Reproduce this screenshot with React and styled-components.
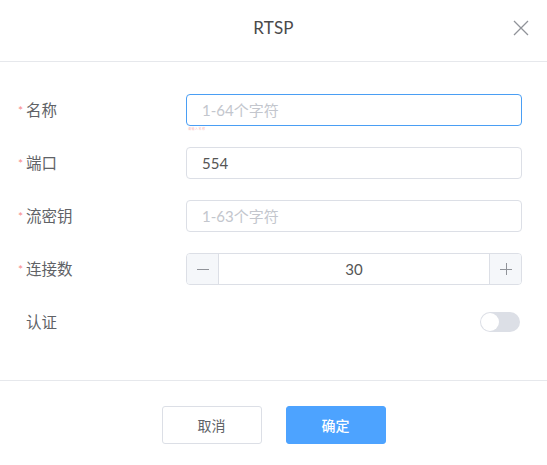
import React, { useState } from "react";
import styled, { createGlobalStyle } from "styled-components";

const Global = createGlobalStyle`
  html, body { margin: 0; padding: 0; background: #fff; }
  body { font-family: Lato, "Noto Sans CJK SC", sans-serif; }
  * { box-sizing: border-box; }
`;

const Dialog = styled.div`
  width: 547px;
  height: 465px;
  background: #fff;
  display: flex;
  flex-direction: column;
`;

const Header = styled.div`
  height: 62px;
  border-bottom: 1px solid #e6e8ec;
  display: flex;
  align-items: center;
  justify-content: center;
  position: relative;
  padding-bottom: 6px;
`;

const Title = styled.div`
  font-size: 17px;
  font-weight: 400;
  color: #4a4a4a;
  letter-spacing: 0.2px;
`;

const Close = styled.button`
  position: absolute;
  right: 17px;
  top: 19px;
  width: 18px;
  height: 18px;
  padding: 0;
  border: none;
  background: transparent;
  display: flex;
  align-items: center;
  justify-content: center;
`;

const Body = styled.div`
  padding: 32px 25px 42px 18px;
  display: flex;
  flex-direction: column;
  gap: 21px;
  border-bottom: 1px solid #e6e8ec;
`;

const Row = styled.div`
  display: flex;
  align-items: center;
  height: 32px;
  position: relative;
`;

const Label = styled.div`
  width: 168px;
  font-size: 15.5px;
  color: #606266;
  display: flex;
  align-items: center;
  padding-bottom: 2px;
`;

const Star = styled.span`
  color: #f78989;
  font-size: 12px;
  width: 8px;
  display: inline-block;
  visibility: ${(p) => (p.$hidden ? "hidden" : "visible")};
  position: relative;
  top: 1px;
`;

const Input = styled.input`
  flex: 1;
  height: 32px;
  border: 1px solid ${(p) => (p.$focus ? "#4a9ef4" : "#dcdfe6")};
  border-radius: 4px;
  padding: 0 15px;
  font-family: Lato, "Noto Sans CJK SC", sans-serif;
  font-size: 15px;
  color: #555;
  outline: none;
  &::placeholder { color: #c3c6cd; }
`;

const Hint = styled.div`
  position: absolute;
  left: 170px;
  top: 33px;
  font-size: 3px;
  color: #f7b8b8;
  letter-spacing: 0.5px;
`;

const Stepper = styled.div`
  flex: 1;
  height: 32px;
  border: 1px solid #dcdfe6;
  border-radius: 4px;
  display: flex;
  overflow: hidden;
`;

const StepBtn = styled.div`
  width: 32px;
  background: #f5f7fa;
  display: flex;
  align-items: center;
  justify-content: center;
  ${(p) => (p.$left ? "border-right: 1px solid #dcdfe6;" : "border-left: 1px solid #dcdfe6;")}
`;

const StepValue = styled.div`
  flex: 1;
  display: flex;
  align-items: center;
  justify-content: center;
  font-size: 15px;
  color: #555;
`;

const Spacer = styled.div`
  flex: 1;
`;

const Switch = styled.div`
  width: 40px;
  height: 20px;
  border-radius: 10px;
  background: #dcdfe6;
  position: relative;
  margin-right: 2px;
  &::after {
    content: "";
    position: absolute;
    left: 1px;
    top: 1px;
    width: 18px;
    height: 18px;
    border-radius: 50%;
    background: #fff;
  }
`;

const Footer = styled.div`
  flex: 1;
  display: flex;
  justify-content: center;
  gap: 24px;
  padding-top: 25px;
`;

const Button = styled.button`
  width: 100px;
  height: 38px;
  border-radius: 3px;
  font-family: Lato, "Noto Sans CJK SC", sans-serif;
  font-size: 14px;
  border: 1px solid ${(p) => (p.$primary ? "#4da3ff" : "#dcdfe6")};
  background: ${(p) => (p.$primary ? "#4da3ff" : "#fff")};
  color: ${(p) => (p.$primary ? "#fff" : "#606266")};
  font-weight: ${(p) => (p.$primary ? 500 : 400)};
`;

export default function App() {
  const [count] = useState(30);
  return (
    <>
      <Global />
      <Dialog>
        <Header>
          <Title>RTSP</Title>
          <Close aria-label="close">
            <svg width="16" height="16" viewBox="0 0 16 16">
              <path d="M1 1L15 15M15 1L1 15" stroke="#909399" strokeWidth="1.3" fill="none" />
            </svg>
          </Close>
        </Header>
        <Body>
          <Row>
            <Label><Star>*</Star>名称</Label>
            <Input $focus placeholder="1-64个字符" />
            <Hint>请输入名称</Hint>
          </Row>
          <Row>
            <Label><Star>*</Star>端口</Label>
            <Input defaultValue="554" />
          </Row>
          <Row>
            <Label><Star>*</Star>流密钥</Label>
            <Input placeholder="1-63个字符" />
          </Row>
          <Row>
            <Label><Star>*</Star>连接数</Label>
            <Stepper>
              <StepBtn $left>
                <svg width="12" height="12" viewBox="0 0 12 12"><path d="M0 6.5H12" stroke="#909399" strokeWidth="1" /></svg>
              </StepBtn>
              <StepValue>{count}</StepValue>
              <StepBtn>
                <svg width="12" height="12" viewBox="0 0 12 12"><path d="M0 6.5H12M6.5 0V12" stroke="#909399" strokeWidth="1" /></svg>
              </StepBtn>
            </Stepper>
          </Row>
          <Row>
            <Label><Star $hidden>*</Star>认证</Label>
            <Spacer />
            <Switch />
          </Row>
        </Body>
        <Footer>
          <Button>取消</Button>
          <Button $primary>确定</Button>
        </Footer>
      </Dialog>
    </>
  );
}
